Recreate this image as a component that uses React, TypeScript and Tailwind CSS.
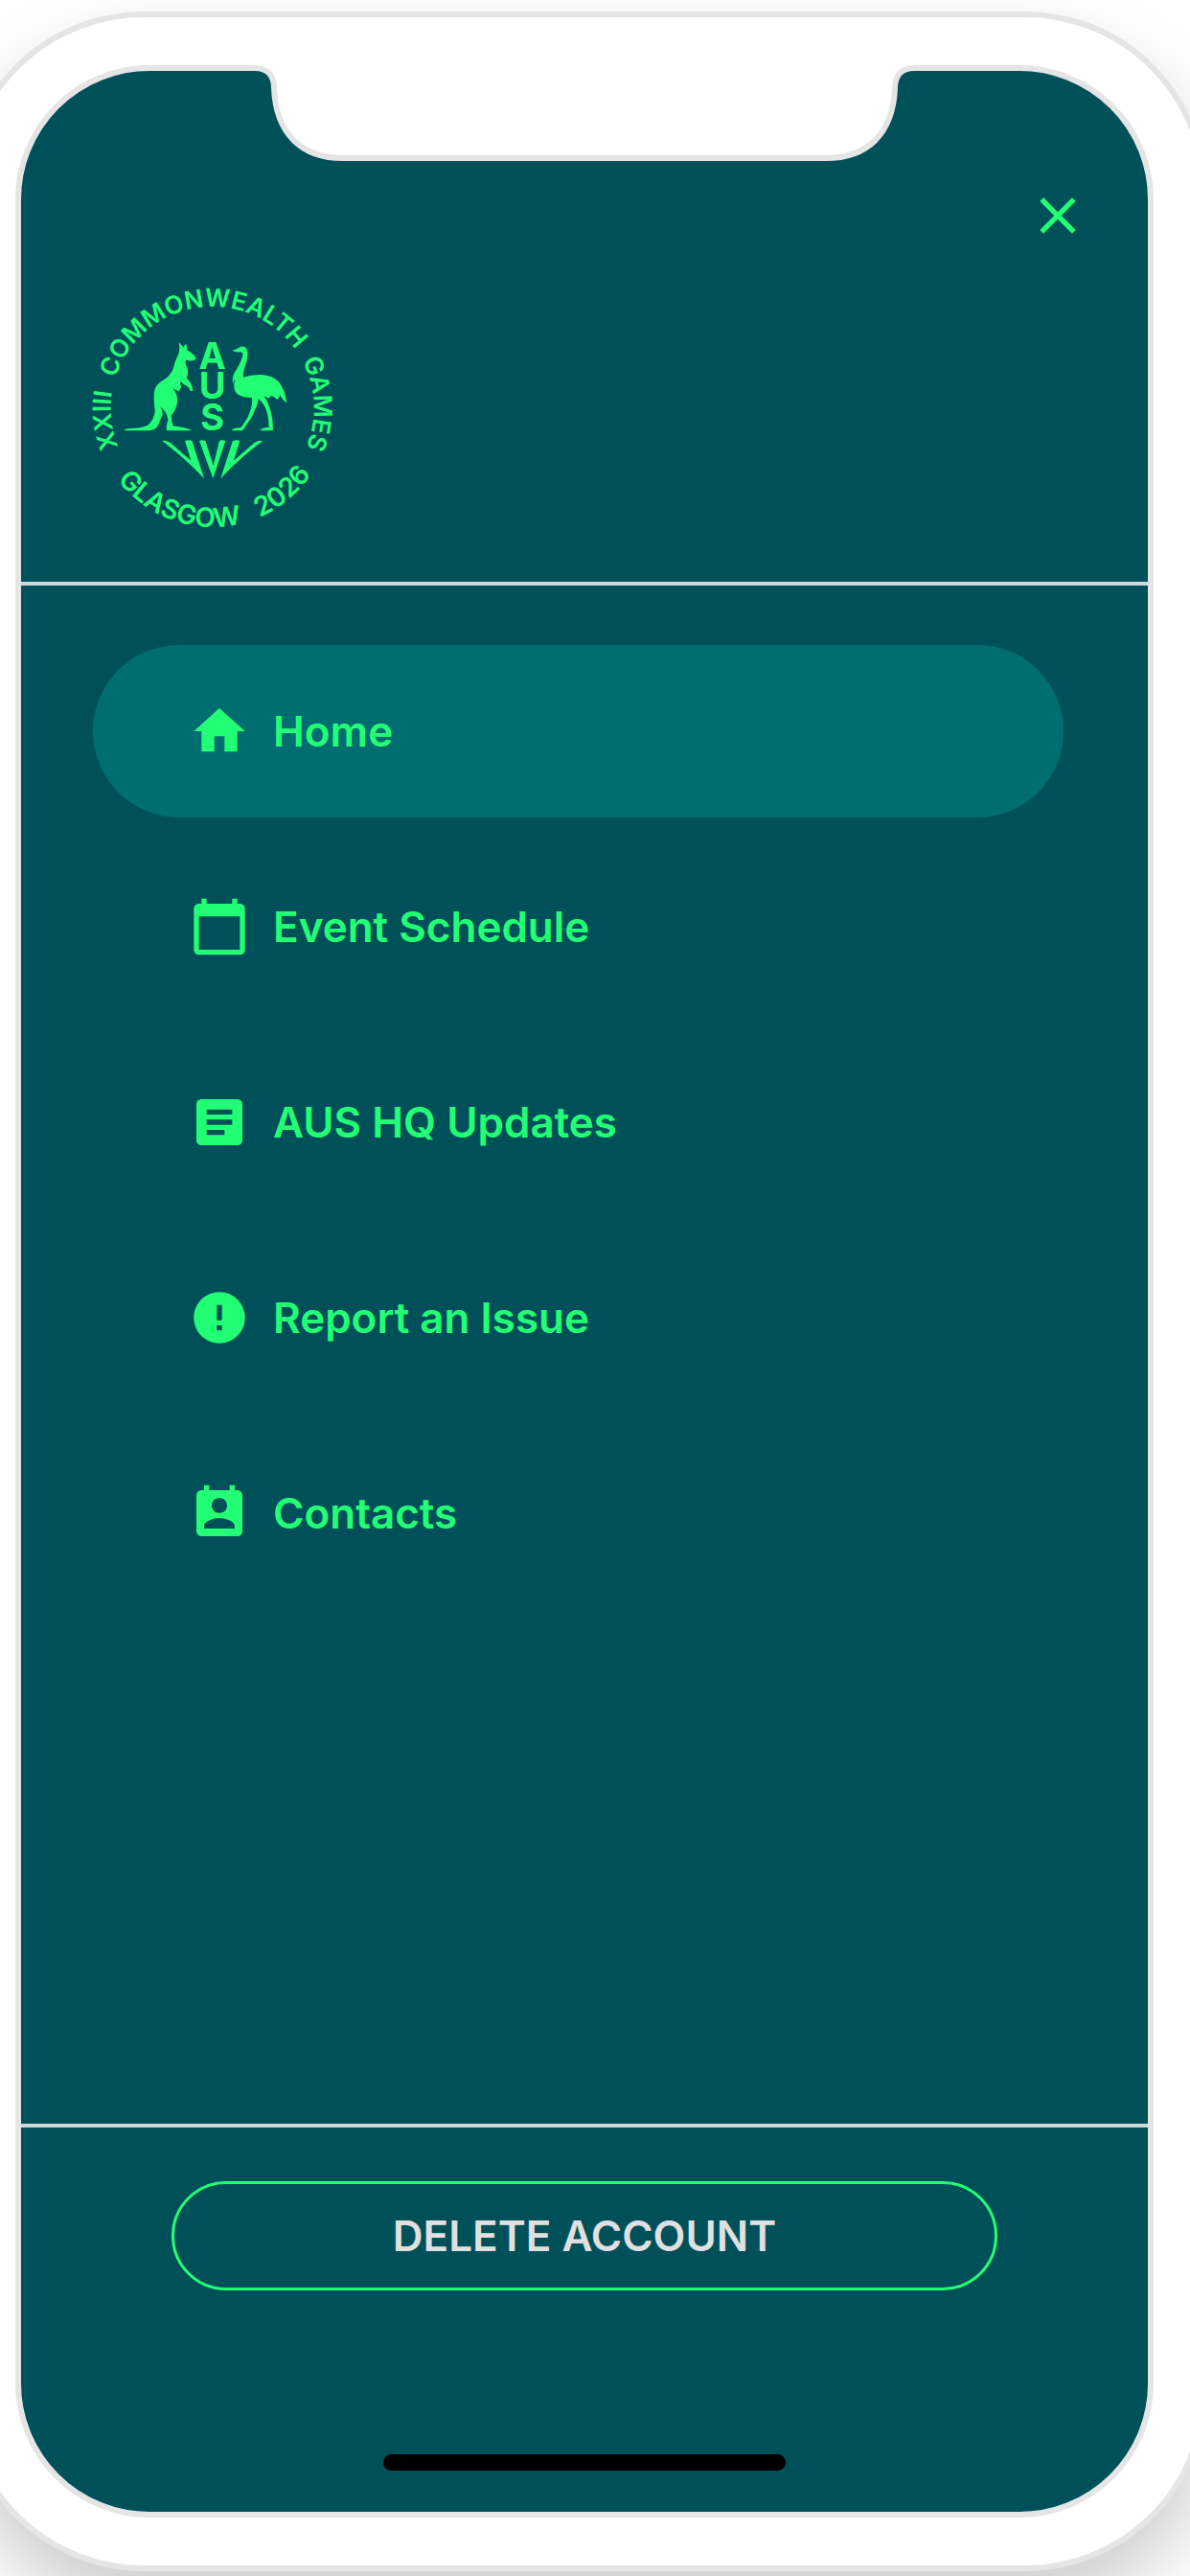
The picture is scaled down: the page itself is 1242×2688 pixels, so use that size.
import type { IconType } from "react-icons";
import {
  MdArticle,
  MdCalendarToday,
  MdClose,
  MdError,
  MdHome,
  MdPermContactCalendar,
} from "react-icons/md";

const items: { label: string; icon: IconType; active?: boolean }[] = [
  { label: "Home", icon: MdHome, active: true },
  { label: "Event Schedule", icon: MdCalendarToday },
  { label: "AUS HQ Updates", icon: MdArticle },
  { label: "Report an Issue", icon: MdError },
  { label: "Contacts", icon: MdPermContactCalendar },
];

function Notch() {
  return (
    <svg
      className="absolute -top-[6px] left-1/2 -translate-x-1/2"
      width="700"
      height="102"
      viewBox="0 0 700 102"
      aria-hidden="true"
    >
      <path
        d="M6 0V3C19 3 26 11 26 24C28 72 55 97 98 97H602C645 97 672 72 674 24C674 11 681 3 694 3V0Z"
        fill="#fff"
      />
      <path
        d="M0 3H6C19 3 26 11 26 24C28 72 55 97 98 97H602C645 97 672 72 674 24C674 11 681 3 694 3H700"
        fill="none"
        stroke="#e5e5e5"
        strokeWidth="6"
      />
    </svg>
  );
}

function TeamLogo() {
  return (
    <svg
      className="size-[250px] overflow-visible fill-[#23ff74]"
      viewBox="52 62 752 752"
      role="img"
      aria-label="XXIII Commonwealth Games, Glasgow 2026"
    >
      <defs>
        {/* Upper ring runs clockwise from the bottom, lower ring counter-clockwise from the top. */}
        <path id="ring-top" d="M427 757A319 319 0 0 1 427 119A319 319 0 0 1 427 757" />
        <path id="ring-bottom" d="M427 65A373 373 0 0 0 427 811A373 373 0 0 0 427 65" />
      </defs>
      <g
        fontFamily="Inter, sans-serif"
        fontWeight="600"
        fontSize="78"
        textAnchor="middle"
      >
        <text>
          <textPath href="#ring-top" startOffset="23.2%">XXIII</textPath>
        </text>
        <text>
          <textPath href="#ring-top" startOffset="47.5%">COMMONWEALTH</textPath>
        </text>
        <text>
          <textPath href="#ring-top" startOffset="74.3%">GAMES</textPath>
        </text>
        <text fontSize="84">
          <textPath href="#ring-bottom" startOffset="44.6%">GLASGOW</textPath>
        </text>
        <text fontSize="84">
          <textPath href="#ring-bottom" startOffset="61.1%">2026</textPath>
        </text>
      </g>
      <g
        fontFamily="Inter, sans-serif"
        fontWeight="700"
        fontSize="114"
        textAnchor="middle"
      >
        <text x="427" y="316">A</text>
        <text x="427" y="408">U</text>
        <text x="427" y="507">S</text>
      </g>
      <path d="M322 231Q330 238 335 247L344 236Q349 246 348 256Q366 264 376 281Q373 288 364 289Q352 290 344 286Q340 298 348 310Q353 328 346 343Q362 356 366 384L357 383Q355 370 336 362L327 353Q324 362 330 370L321 385Q310 378 302 376Q318 390 317 415Q316 440 298 461Q299 480 304 494Q340 497 364 508H284Q281 494 288 474Q285 450 263 433Q272 445 271 458Q262 475 256 493Q247 507 230 508H150Q153 500 180 501Q215 500 229 488Q245 470 247 445Q243 425 244 390Q246 366 268 353Q292 340 303 317Q309 290 322 264Q326 245 322 231Z" />
      <path d="M490 256Q502 253 508 249Q516 242 527 245Q538 251 538 267Q537 290 528 312Q523 328 524 341Q550 332 580 333Q614 335 634 354Q655 378 660 422Q648 412 638 396Q640 406 630 410Q620 400 610 398Q610 407 600 405L588 400Q598 410 602 424Q610 440 614 465Q618 485 617 508H577Q580 499 604 498Q605 460 590 430Q582 415 570 409Q572 420 562 440Q552 468 534 490L522 508H487Q492 499 516 499Q540 470 548 440Q554 420 551 405Q520 405 505 393Q492 380 496 358L500 345Q494 352 492 362Q486 340 502 318Q522 285 523 266Q518 260 508 262Q498 263 490 256Z" />
      <path d="M269 540Q284 537 296 547L360 603L341 540Q351 536 363 540L401 658Q345 598 269 540Z" />
      <path d="M386 540Q395 536 405 540L430 618L449 540Q458 536 468 540L429 658Z" />
      <path d="M585 540Q570 537 558 547L494 603L513 540Q503 536 491 540L453 658Q509 598 585 540Z" />
    </svg>
  );
}

export default function App() {
  return (
    <div className="flex min-h-screen flex-col overflow-hidden bg-white pt-3 pb-[5px] font-[Inter,sans-serif] text-[#23ff74]">
      <div className="-mr-[18px] -ml-10 flex flex-1 flex-col rounded-[190px] border-6 border-[#e5e5e5] bg-white p-[50px] shadow-[0_40px_80px_rgba(0,0,0,0.2)]">
        <div className="relative flex flex-1 flex-col rounded-[140px] border-6 border-[#e5e5e5] bg-[#00505a]">
          <Notch />
          <header className="border-b-4 border-[#ccdadc] pt-[119px] pb-14">
            <div className="flex justify-end pr-[62px]">
              <button type="button" aria-label="Close menu">
                <MdClose className="size-16" />
              </button>
            </div>
            <div className="mt-11 pl-[75px]">
              <TeamLogo />
            </div>
          </header>

          <nav className="flex-1 pt-[62px] pr-[88px] pl-[75px]">
            <ul className="flex flex-col gap-6">
              {items.map(({ label, icon: Icon, active }) => (
                <li key={label}>
                  <a
                    href="#"
                    aria-current={active ? "page" : undefined}
                    className={`flex h-[180px] items-center gap-6 rounded-full pl-[100px] text-[44px] font-semibold ${
                      active ? "bg-[#006d71]" : ""
                    }`}
                  >
                    <Icon className="size-16" />
                    {label}
                  </a>
                </li>
              ))}
            </ul>
          </nav>

          <footer className="border-t-4 border-[#ccdadc] pt-14 pb-[43px]">
            <div className="px-[157px]">
              <button
                type="button"
                className="h-[114px] w-full rounded-full border-3 border-[#23ff74] text-[44px] font-semibold text-[#e0e0e0]"
              >
                DELETE ACCOUNT
              </button>
            </div>
            <div className="mx-auto mt-[171px] h-[17px] w-[420px] rounded-full bg-black" />
          </footer>
        </div>
      </div>
    </div>
  );
}
